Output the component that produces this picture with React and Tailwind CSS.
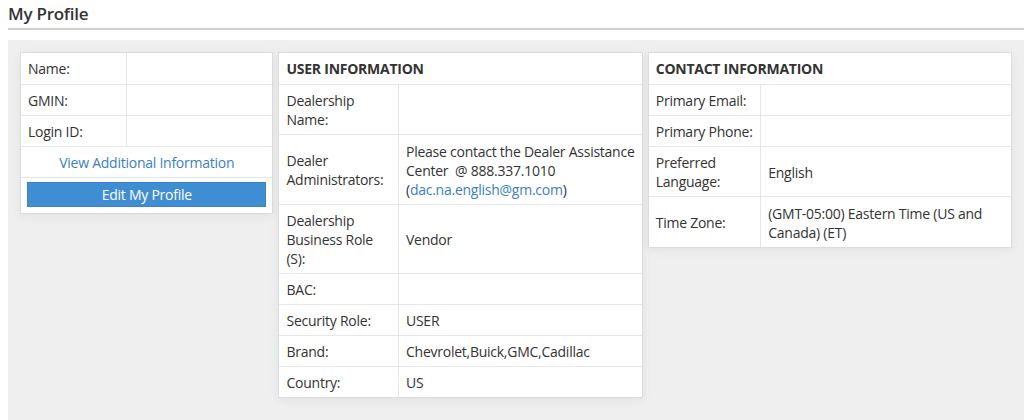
import React from "react";

const font = { fontFamily: '"Open Sans", "Noto Sans", sans-serif' };

function Row({ label, children, labelW, first }) {
  return (
    <tr className={first ? "align-middle" : "border-t border-[#e6e6e6] align-middle"}>
      <td className={`${labelW} whitespace-nowrap px-[7px] pt-[6px] pb-[5px] border-r border-[#e6e6e6]`}>{label}</td>
      <td className="px-[7px] pt-[6px] pb-[5px]">{children}</td>
    </tr>
  );
}

const cardCls = "self-start bg-white border border-[#dcdcdc] shadow-[0_2px_10px_rgba(0,0,0,0.06)]";

const ProfileCard = () => {
  return (
    <div className={`w-[254px] ${cardCls}`}>
      <table className="w-full table-fixed">
        <tbody>
          <tr className="align-middle">
            <td className="w-[105px] px-[7px] py-[6px] border-r border-[#e6e6e6]">Name:</td>
            <td className="px-[7px] py-[6px]"></td>
          </tr>
          <Row label="GMIN:" labelW="w-[105px]"></Row>
          <Row label="Login ID:" labelW="w-[105px]"></Row>
          <tr className="border-t border-[#e6e6e6]">
            <td colSpan={2} className="px-[7px] pt-[6px] pb-[5px] text-center text-[#3a7fc1]">
              View Additional Information
            </td>
          </tr>
          <tr className="border-t border-[#e6e6e6]">
            <td colSpan={2} className="px-[6px] pt-[4px] pb-[6px]">
              <button className="w-full h-[25px] bg-[#3f8ed4] border border-[#3a84c6] text-white leading-[22px]">
                Edit My Profile
              </button>
            </td>
          </tr>
        </tbody>
      </table>
    </div>
  );
};

const UserCard = () => {
  return (
    <div className={`w-[365px] ${cardCls}`}>
      <div className="px-[7px] pt-[6px] pb-[6px] font-bold">USER INFORMATION</div>
      <table className="w-full table-fixed">
        <tbody>
          <Row label={<>Dealership<br />Name:</>} labelW="w-[119px]"></Row>
          <Row label={<>Dealer<br />Administrators:</>} labelW="w-[119px]">
            <div className="pt-[1px]">
              <span className="whitespace-nowrap">Please contact the Dealer Assistance</span>
              <br />
              Center&nbsp; @ 888.337.1010
              <br />
              (<span className="text-[#3a7fc1]">dac.na.english@gm.com</span>)
            </div>
          </Row>
          <Row label={<>Dealership<br />Business Role<br />(S):</>} labelW="w-[119px]">Vendor</Row>
          <Row label="BAC:" labelW="w-[119px]"></Row>
          <Row label="Security Role:" labelW="w-[119px]">USER</Row>
          <Row label="Brand:" labelW="w-[119px]">Chevrolet,Buick,GMC,Cadillac</Row>
          <Row label="Country:" labelW="w-[119px]">US</Row>
        </tbody>
      </table>
    </div>
  );
};

const ContactCard = () => {
  return (
    <div className={`w-[365px] ${cardCls}`}>
      <div className="px-[7px] pt-[6px] pb-[6px] font-bold">CONTACT INFORMATION</div>
      <table className="w-full table-fixed">
        <tbody>
          <Row label="Primary Email:" labelW="w-[112px]"></Row>
          <Row label="Primary Phone:" labelW="w-[112px]"></Row>
          <Row label={<>Preferred<br />Language:</>} labelW="w-[112px]">English</Row>
          <Row label="Time Zone:" labelW="w-[112px]">
            <div className="pt-[1px]">
              <span className="whitespace-nowrap">(GMT-05:00) Eastern Time (US and</span>
              <br />
              Canada) (ET)
            </div>
          </Row>
        </tbody>
      </table>
    </div>
  );
};

export default function App() {
  return (
    <div style={font} className="w-[1024px] h-[420px] overflow-hidden bg-white text-[14px] leading-[19px] tracking-[-0.25px] text-[#333]">
      <div className="pl-2">
        <h1 className="pt-[3px] h-[28px] text-[17px] leading-[21px] font-semibold text-[#333]">My Profile</h1>
        <div className="h-[2px] bg-[#cfcfcf]"></div>
        <div className="mt-[10px] h-[400px] bg-[#efefef] px-3 pt-3 flex gap-[5px]">
          <ProfileCard />
          <UserCard />
          <ContactCard />
        </div>
      </div>
    </div>
  );
}
